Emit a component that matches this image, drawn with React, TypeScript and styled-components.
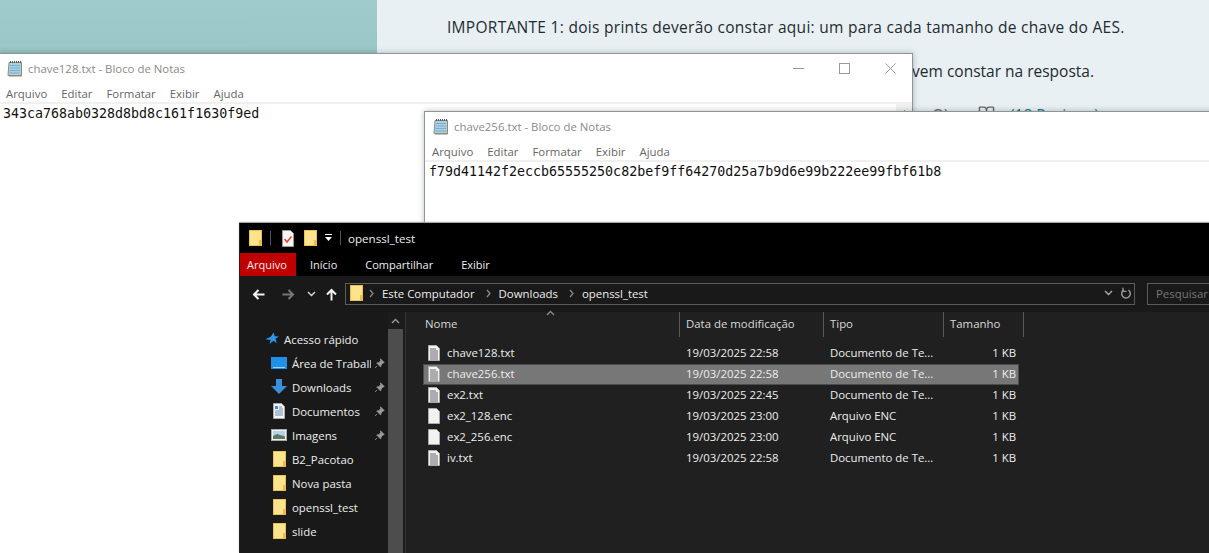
import React from 'react';
import styled, { createGlobalStyle } from 'styled-components';
import { BookOpen } from 'lucide-react';

const GlobalStyle = createGlobalStyle`
    html, body {
        margin: 0;
        padding: 0;
        width: 1209px;
        height: 553px;
        overflow: hidden;
        background: #e8f0f3;
    }
`;

const UI_FONT = `"Open Sans", "Noto Sans", "Liberation Sans", sans-serif`;

const Desktop = styled.div`
    position: relative;
    width: 1209px;
    height: 553px;
    overflow: hidden;
    display: flex;
    font-family: ${UI_FONT};
`;
const TealPanel = styled.div`
    width: 377px;
    height: 60px;
    background: linear-gradient(#a0cbcc, #98c6c6);
`;
const Article = styled.div`
    flex: 1;
    padding-top: 17px;
    color: #1f2b30;
    font-size: 15.5px;
    line-height: 20px;
`;
const Paragraph = styled.p`
    margin: 0 0 24px;
    padding-left: 70px;
    white-space: nowrap;
    letter-spacing: .29px;
`;
const ParagraphEnd = styled(Paragraph)`
    padding-left: 0;
    padding-right: 115px;
    text-align: right;
    letter-spacing: 0;
`;
const Reviews = styled.div`
    padding-left: 555px;
    margin-top: 3px;
    white-space: nowrap;
    color: #666;
    display: flex;
    align-items: flex-start;
`;
const ReviewMark = styled.span`
    width: 46px;
`;
const ReviewLink = styled.span`
    margin-left: 15px;
    color: #0f7f8a;
`;

/* windows are placed on a free desktop, that is the content itself */
const Notepad = styled.div<{ $left: number; $top: number; $width: number }>`
    position: absolute;
    left: ${p => p.$left}px;
    top: ${p => p.$top}px;
    width: ${p => p.$width}px;
    height: ${p => 553 - p.$top}px;
    background: #fff;
    border: 1px solid #8f9596;
    border-bottom: 0;
    box-sizing: border-box;
    box-shadow: 0 0 6px rgba(0, 0, 0, .25);
`;
const NoteTitle = styled.div`
    height: 29px;
    display: flex;
    align-items: center;
    gap: 5px;
    padding-left: 8px;
    color: #8a8a8a;
    font-size: 11.4px;
`;
const TitleText = styled.span`
    flex: 1;
`;
const WinButtons = styled.div`
    display: flex;
    margin-right: -1px;
`;
const WinButton = styled.div`
    width: 46px;
    height: 29px;
    display: flex;
    align-items: center;
    justify-content: center;
`;
const NoteMenu = styled.div`
    height: 21px;
    box-sizing: border-box;
    padding-top: 2px;
    display: flex;
    align-items: center;
    gap: 14px;
    padding-left: 7px;
    color: #666;
    font-size: 11.4px;
    border-bottom: 2px solid #f0f0f0;
`;
const NoteText = styled.div`
    font-family: "DejaVu Sans Mono", "Liberation Mono", monospace;
    font-size: 13.3px;
    line-height: 18px;
    color: #111;
    padding: 1px 0 0 4px;
    white-space: nowrap;
`;
const NoteScrollbar = styled.div`
    position: absolute;
    right: 0;
    top: 50px;
    bottom: 0;
    width: 16px;
    background: #f0f0f0;
    display: flex;
    justify-content: center;
    padding-top: 6px;
`;

const Explorer = styled.div`
    position: absolute;
    left: 239px;
    top: 223px;
    right: 0;
    bottom: 0;
    background: #191919;
    color: #ededed;
    font-size: 11.4px;
    display: flex;
    flex-direction: column;
    border-left: 1px solid #222;
    box-shadow: 0 -1px 1px #a5a5a5;
`;
const ExTitle = styled.div`
    height: 30px;
    background: #000;
    display: flex;
    align-items: center;
    padding-left: 9px;
    gap: 8px;
    font-size: 11.6px;
`;
const TitleBar = styled.span<{ $after: number }>`
    width: 1px;
    height: 14px;
    background: #555;
    margin-right: ${p => p.$after}px;
`;
const Ribbon = styled.div`
    height: 23px;
    background: #000;
    display: flex;
    align-items: stretch;
`;
const RibbonTab = styled.div<{ $active?: boolean }>`
    padding: 0 14px 0 ${p => (p.$active ? 7 : 14)}px;
    width: ${p => (p.$active ? '56px' : 'auto')};
    box-sizing: border-box;
    display: flex;
    align-items: center;
    font-size: 11px;
    background: ${p => (p.$active ? '#c00000' : 'transparent')};
`;
const AddressRow = styled.div`
    height: 36px;
    display: flex;
    align-items: center;
    padding-left: 12px;
    flex-shrink: 0;
`;
const NavGroup = styled.div`
    width: 93px;
    flex-shrink: 0;
    display: flex;
    align-items: center;
`;
const NavSlot = styled.div<{ $gap: number }>`
    margin-left: ${p => p.$gap}px;
    display: flex;
`;
const AddressBox = styled.div`
    width: 790px;
    height: 22px;
    box-sizing: border-box;
    border: 1px solid #5b5b5b;
    display: flex;
    align-items: center;
    padding: 0 0 2px 4px;
    flex-shrink: 0;
`;
const Crumb = styled.span`
    margin: 0 8px;
`;
const CrumbArrow = styled.span`
    margin-left: 3px;
    display: flex;
`;
const AddressEnd = styled.div`
    margin-left: auto;
    display: flex;
    align-items: center;
    gap: 7px;
    padding-right: 2px;
`;
const SearchBox = styled.div`
    margin-left: 12px;
    width: 100px;
    height: 22px;
    box-sizing: border-box;
    border: 1px solid #5b5b5b;
    color: #777;
    padding: 0 0 2px 8px;
    display: flex;
    align-items: center;
    flex-shrink: 0;
`;
const Body = styled.div`
    flex: 1;
    display: flex;
    min-height: 0;
`;
const Sidebar = styled.div`
    width: 148px;
    padding-top: 16px;
    box-sizing: border-box;
    flex-shrink: 0;
`;
const NavRow = styled.div<{ $top?: boolean }>`
    height: 24px;
    box-sizing: border-box;
    padding-bottom: 2px;
    display: flex;
    align-items: center;
    padding-left: ${p => (p.$top ? 25 : 31)}px;
    gap: 5px;
    white-space: nowrap;
`;
const NavIconSlot = styled.span`
    width: 16px;
    display: flex;
    justify-content: center;
    flex-shrink: 0;
`;
const NavLabel = styled.span`
    width: 79px;
    overflow: hidden;
    flex-shrink: 0;
`;
const PinSlot = styled.span`
    margin-left: -2px;
    display: flex;
`;
const ScrollTrack = styled.div`
    width: 17px;
    background: #1c1c1c;
    flex-shrink: 0;
    display: flex;
    flex-direction: column;
    align-items: flex-start;
`;
const ScrollArrow = styled.div`
    width: 15px;
    height: 17px;
    display: flex;
    align-items: center;
    justify-content: center;
`;
const ScrollThumb = styled.div`
    width: 15px;
    flex: 1;
    background: #4d4d4d;
`;
const List = styled.div`
    flex: 1;
    background: #202020;
    padding-left: 17px;
    position: relative;
    border-left: 1px solid #333;
`;
const HeaderRow = styled.div`
    height: 25px;
    display: grid;
    grid-template-columns: 257px 144px 120px 80px;
    margin-bottom: 6px;
    color: #d8d8d8;
`;
const HeaderCell = styled.div<{ $first?: boolean }>`
    padding: 0 0 2px ${p => (p.$first ? 2 : 6)}px;
    display: flex;
    align-items: center;
    border-right: 1px solid #5a5a5a;
    position: relative;
`;
const SortCaret = styled.span`
    position: absolute;
    left: 123px;
    top: -2px;
    display: flex;
`;
const FileRow = styled.div<{ $selected?: boolean }>`
    height: 21px;
    width: 596px;
    box-sizing: border-box;
    padding-bottom: 2px;
    display: grid;
    grid-template-columns: 257px 144px 120px 72px;
    align-items: center;
    background: ${p => (p.$selected ? '#777' : 'transparent')};
    box-shadow: ${p => (p.$selected ? 'inset 0 0 0 1px #4c4c4c' : 'none')};
    white-space: nowrap;
`;
const NameCell = styled.div`
    display: flex;
    align-items: center;
    gap: 7px;
    padding-left: 5px;
`;
const Cell = styled.div`
    padding-left: 6px;
    overflow: hidden;
`;
const SizeCell = styled.div`
    text-align: right;
`;

const NotepadIcon = () => (
    <svg width="16" height="17" viewBox="0 0 16 17">
        <path d="M2 2.5h12.5v13H1z" fill="#a9d0e4" stroke="#8b8f8a" />
        <path d="M3 5.5h10M3 8h10M2.5 10.5h10.5M2.5 13h10.5" stroke="#78aec8" />
        <path d="M3 2h11" stroke="#555" strokeDasharray="1 1" strokeWidth="2" />
        <path d="M14.5 3v13H2" fill="none" stroke="#9a8468" />
    </svg>
);

const FolderIcon = () => (
    <svg width="13" height="16" viewBox="0 0 13 16">
        <rect x="0.5" y="0.5" width="12" height="15" fill="#fde38b" stroke="#e8c252" />
        <rect x="10" y="10" width="3" height="6" fill="#e8bd4c" />
    </svg>
);

const ChecklistIcon = () => (
    <svg width="14" height="17" viewBox="0 0 14 17">
        <path d="M.5.5h8l3 3v13H.5z" fill="#f5f5f5" stroke="#999" />
        <path d="M2.5 9l2.5 3 4.5-5.5" fill="none" stroke="#e0442c" strokeWidth="1.5" />
    </svg>
);

const QuickAccessDrop = () => (
    <svg width="7" height="8" viewBox="0 0 7 8">
        <path d="M0 .5h7" stroke="#fff" />
        <path d="M0 3h7L3.5 7z" fill="#fff" />
    </svg>
);

const TextFileIcon = ({ blank }: { blank?: boolean }) => (
    <svg width="12" height="16" viewBox="0 0 12 16">
        <path d="M.5.5h8l3 3v12H.5z" fill="#f2f2f2" stroke="#aaa" />
        {!blank && <path d="M2 4h6M2 6h8M2 8h8M2 10h8M2 12h8M2 14h8" stroke="#666" />}
    </svg>
);

const ArrowIcon = ({ dir, color }: { dir: 'left' | 'right' | 'up'; color: string }) => {
    const rotate = dir === 'left' ? 0 : dir === 'right' ? 180 : 90;
    return (
        <svg width="13" height="13" viewBox="0 0 13 13" style={{ transform: `rotate(${rotate}deg)` }}>
            <path d="M12.5 6.5H2M6.5 2L2 6.5 6.5 11" fill="none" stroke={color} strokeWidth="2" />
        </svg>
    );
};

const Chevron = ({ color = '#ddd', up }: { color?: string; up?: boolean }) => (
    <svg width="9" height="6" viewBox="0 0 9 6">
        <path d={up ? 'M1 5l3.5-3.5L8 5' : 'M1 1l3.5 3.5L8 1'} fill="none" stroke={color} strokeWidth="1.4" />
    </svg>
);

const CrumbChevron = () => (
    <CrumbArrow>
        <svg width="5" height="9" viewBox="0 0 5 9">
            <path d="M1 1l3 3.5L1 8" fill="none" stroke="#888" strokeWidth="1.3" />
        </svg>
    </CrumbArrow>
);

const RefreshIcon = () => (
    <svg width="12" height="13" viewBox="0 0 12 13">
        <path d="M8.5 3.2A4.3 4.3 0 1 1 3.5 3.2" fill="none" stroke="#999" strokeWidth="1.5" />
        <path d="M3 .8v3.5h3.5" fill="none" stroke="#999" strokeWidth="1.3" />
    </svg>
);

const PinIcon = () => (
    <svg width="11" height="11" viewBox="0 0 11 11">
        <path d="M6.5 .8l3.7 3.7-1.2.5-2 2-.3 2-4-4 2-.3 2-2zM3 8l-2 2" fill="#999" stroke="#999" strokeWidth=".8" />
    </svg>
);

const StarIcon = () => (
    <svg width="14" height="14" viewBox="0 0 14 14">
        <path d="M8.5.5l1.3 3.8 4 .1-3.2 2.4 1.2 4.4-3.3-2.5L4.5 12l1.1-3.9L.4 7.3l5.6-2.8z" fill="#2e95e8" />
    </svg>
);

const DesktopIcon = () => (
    <svg width="16" height="13" viewBox="0 0 16 13">
        <rect width="16" height="12" fill="#1e90e8" />
        <path d="M2 10.5h12" stroke="#9fd4f8" />
    </svg>
);

const DownloadIcon = () => (
    <svg width="16" height="16" viewBox="0 0 16 16">
        <path d="M5 0h6v7h5l-8 8-8-8h5z" fill="#3a8fdc" />
    </svg>
);

const DocumentIcon = () => (
    <svg width="12" height="16" viewBox="0 0 12 16">
        <path d="M.5.5h8l3 3v12H.5z" fill="#f4f4f4" stroke="#aaa" />
        <path d="M2 3h3v3H2z" fill="#3a8fdc" />
        <path d="M6 4h3M6 6h4M2 8h8M2 10h8M2 12h8" stroke="#6b8fb0" />
    </svg>
);

const ImageIcon = () => (
    <svg width="16" height="12" viewBox="0 0 16 12">
        <rect x=".5" y=".5" width="15" height="11" fill="#f0f0f0" stroke="#aaa" />
        <rect x="2" y="2" width="12" height="8" fill="#b5d3e5" />
        <path d="M2 7l4-2 8 2.5V10H2z" fill="#5a7a68" />
    </svg>
);

interface FileItem {
    name: string;
    date: string;
    type: string;
    blank?: boolean;
    selected?: boolean;
}

const FILES: FileItem[] = [
    { name: 'chave128.txt', date: '19/03/2025 22:58', type: 'Documento de Te...' },
    { name: 'chave256.txt', date: '19/03/2025 22:58', type: 'Documento de Te...', selected: true },
    { name: 'ex2.txt', date: '19/03/2025 22:45', type: 'Documento de Te...' },
    { name: 'ex2_128.enc', date: '19/03/2025 23:00', type: 'Arquivo ENC', blank: true },
    { name: 'ex2_256.enc', date: '19/03/2025 23:00', type: 'Arquivo ENC', blank: true },
    { name: 'iv.txt', date: '19/03/2025 22:58', type: 'Documento de Te...' },
];

const NAV_ITEMS: { label: string; icon: React.ReactNode; pinned?: boolean }[] = [
    { label: 'Área de Trabalho', icon: <DesktopIcon />, pinned: true },
    { label: 'Downloads', icon: <DownloadIcon />, pinned: true },
    { label: 'Documentos', icon: <DocumentIcon />, pinned: true },
    { label: 'Imagens', icon: <ImageIcon />, pinned: true },
    { label: 'B2_Pacotao', icon: <FolderIcon /> },
    { label: 'Nova pasta', icon: <FolderIcon /> },
    { label: 'openssl_test', icon: <FolderIcon /> },
    { label: 'slide', icon: <FolderIcon /> },
];

const NoteWindow = ({ title, text, left, top, width, controls }: {
    title: string;
    text: string;
    left: number;
    top: number;
    width: number;
    controls?: boolean;
}) => (
    <Notepad $left={left} $top={top} $width={width}>
        <NoteTitle>
            <NotepadIcon />
            <TitleText>{title}</TitleText>
            {controls && (
                <WinButtons>
                    <WinButton>
                        <svg width="11" height="11" viewBox="0 0 11 11"><path d="M0 5.5h11" stroke="#999" /></svg>
                    </WinButton>
                    <WinButton>
                        <svg width="11" height="11" viewBox="0 0 11 11"><rect x=".5" y=".5" width="10" height="10" fill="none" stroke="#999" /></svg>
                    </WinButton>
                    <WinButton>
                        <svg width="11" height="11" viewBox="0 0 11 11"><path d="M.5.5l10 10M10.5.5l-10 10" stroke="#999" /></svg>
                    </WinButton>
                </WinButtons>
            )}
        </NoteTitle>
        <NoteMenu>
            {['Arquivo', 'Editar', 'Formatar', 'Exibir', 'Ajuda'].map(m => <span key={m}>{m}</span>)}
        </NoteMenu>
        <NoteText>{text}</NoteText>
        {controls && (
            <NoteScrollbar>
                <svg width="7" height="4" viewBox="0 0 7 4"><path d="M.5 3.5l3-3 3 3" fill="none" stroke="#777" /></svg>
            </NoteScrollbar>
        )}
    </Notepad>
);

export default function App() {
    return (
        <Desktop>
            <GlobalStyle />
            <TealPanel />
            <Article>
                <Paragraph>IMPORTANTE 1: dois prints deverão constar aqui: um para cada tamanho de chave do AES.</Paragraph>
                <ParagraphEnd>devem constar na resposta.</ParagraphEnd>
                <Reviews>
                    <ReviewMark>O)</ReviewMark>
                    <BookOpen size={17} color="#666" />
                    <ReviewLink>(18 Reviews)</ReviewLink>
                </Reviews>
            </Article>

            <NoteWindow title="chave128.txt - Bloco de Notas" text="343ca768ab0328d8bd8c161f1630f9ed" left={-2} top={53} width={915} controls />
            <NoteWindow title="chave256.txt - Bloco de Notas" text="f79d41142f2eccb65555250c82bef9ff64270d25a7b9d6e99b222ee99fbf61b8" left={424} top={111} width={800} />

            <Explorer>
                <ExTitle>
                    <FolderIcon />
                    <TitleBar $after={3} />
                    <ChecklistIcon />
                    <FolderIcon />
                    <QuickAccessDrop />
                    <TitleBar $after={-1} />
                    <span>openssl_test</span>
                </ExTitle>
                <Ribbon>
                    <RibbonTab $active>Arquivo</RibbonTab>
                    <RibbonTab>Início</RibbonTab>
                    <RibbonTab>Compartilhar</RibbonTab>
                    <RibbonTab>Exibir</RibbonTab>
                </Ribbon>
                <AddressRow>
                    <NavGroup>
                        <NavSlot $gap={0}><ArrowIcon dir="left" color="#f2f2f2" /></NavSlot>
                        <NavSlot $gap={17}><ArrowIcon dir="right" color="#777" /></NavSlot>
                        <NavSlot $gap={12}><Chevron /></NavSlot>
                        <NavSlot $gap={9}><ArrowIcon dir="up" color="#f2f2f2" /></NavSlot>
                    </NavGroup>
                    <AddressBox>
                        <FolderIcon />
                        <CrumbArrow />
                        <CrumbChevron />
                        <Crumb>Este Computador</Crumb>
                        <CrumbChevron />
                        <Crumb>Downloads</Crumb>
                        <CrumbChevron />
                        <Crumb>openssl_test</Crumb>
                        <AddressEnd>
                            <Chevron color="#aaa" />
                            <RefreshIcon />
                        </AddressEnd>
                    </AddressBox>
                    <SearchBox>Pesquisar</SearchBox>
                </AddressRow>
                <Body>
                    <Sidebar>
                        <NavRow $top>
                            <StarIcon />
                            <span>Acesso rápido</span>
                        </NavRow>
                        {NAV_ITEMS.map(item => (
                            <NavRow key={item.label}>
                                <NavIconSlot>{item.icon}</NavIconSlot>
                                <NavLabel>{item.label}</NavLabel>
                                {item.pinned && <PinSlot><PinIcon /></PinSlot>}
                            </NavRow>
                        ))}
                    </Sidebar>
                    <ScrollTrack>
                        <ScrollArrow><Chevron color="#999" up /></ScrollArrow>
                        <ScrollThumb />
                    </ScrollTrack>
                    <List>
                        <HeaderRow>
                            <HeaderCell $first>
                                Nome
                                <SortCaret><Chevron color="#888" up /></SortCaret>
                            </HeaderCell>
                            <HeaderCell>Data de modificação</HeaderCell>
                            <HeaderCell>Tipo</HeaderCell>
                            <HeaderCell>Tamanho</HeaderCell>
                        </HeaderRow>
                        {FILES.map(file => (
                            <FileRow key={file.name} $selected={file.selected}>
                                <NameCell>
                                    <TextFileIcon blank={file.blank} />
                                    {file.name}
                                </NameCell>
                                <Cell>{file.date}</Cell>
                                <Cell>{file.type}</Cell>
                                <SizeCell>1 KB</SizeCell>
                            </FileRow>
                        ))}
                    </List>
                </Body>
            </Explorer>
        </Desktop>
    );
}
